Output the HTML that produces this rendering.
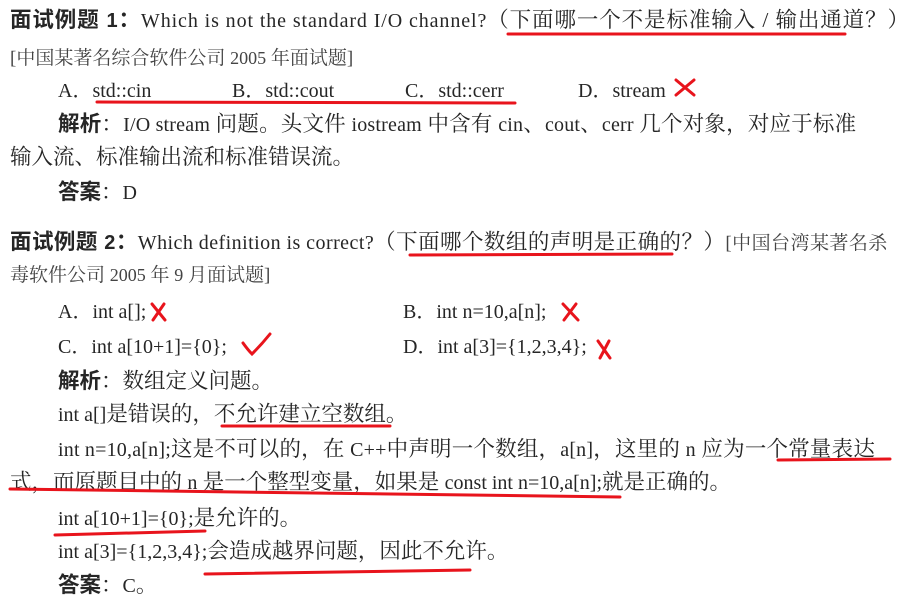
<!DOCTYPE html>
<html><head><meta charset="utf-8"><style>
body{margin:0;width:909px;height:603px;background:#fff;overflow:hidden;position:relative;}
.l{position:absolute;white-space:nowrap;font-family:"Liberation Serif","Noto Serif CJK SC",serif;font-size:21.5px;line-height:26px;color:#262626;}
.l i{font-style:normal;font-size:20px;}
.b{font-family:"Liberation Sans","Noto Sans CJK SC",sans-serif;font-weight:bold;}
.s{font-size:19px;color:#444;}
.s i{font-size:18px;}
svg{position:absolute;left:0;top:0;}
</style></head><body>
<div class="l" style="left:10px;top:7px;letter-spacing:0.9px"><span class="b">面试例题 <i>1</i>：</span><i>Which is not the standard I/O channel?</i>（下面哪一个不是标准输入 / 输出通道？）</div>
<div class="l s" style="left:10px;top:45px">[中国某著名综合软件公司 <i>2005</i> 年面试题]</div>
<div class="l" style="left:58px;top:77px"><i>A．std::cin</i></div>
<div class="l" style="left:232px;top:77px"><i>B．std::cout</i></div>
<div class="l" style="left:405px;top:77px"><i>C．std::cerr</i></div>
<div class="l" style="left:578px;top:77px"><i>D．stream</i></div>
<div class="l" style="left:58px;top:111px;letter-spacing:0.2px"><span class="b">解析</span>：<i>I/O stream</i> 问题。头文件 <i>iostream</i> 中含有 <i>cin</i>、<i>cout</i>、<i>cerr</i> 几个对象，对应于标准</div>
<div class="l" style="left:10px;top:144px">输入流、标准输出流和标准错误流。</div>
<div class="l" style="left:58px;top:179px"><span class="b">答案</span>：<i>D</i></div>
<div class="l" style="left:10px;top:229px;letter-spacing:0.45px"><span class="b">面试例题 <i>2</i>：</span><i>Which definition is correct?</i>（下面哪个数组的声明是正确的？）<span class="s">[中国台湾某著名杀</span></div>
<div class="l s" style="left:10px;top:262px">毒软件公司 <i>2005</i> 年 <i>9</i> 月面试题]</div>
<div class="l" style="left:58px;top:298px"><i>A．int a[];</i></div>
<div class="l" style="left:403px;top:298px"><i>B．int n=10,a[n];</i></div>
<div class="l" style="left:58px;top:333px"><i>C．int a[10+1]={0};</i></div>
<div class="l" style="left:403px;top:333px"><i>D．int a[3]={1,2,3,4};</i></div>
<div class="l" style="left:58px;top:368px"><span class="b">解析</span>：数组定义问题。</div>
<div class="l" style="left:58px;top:401px"><i>int a[]</i>是错误的，不允许建立空数组。</div>
<div class="l" style="left:58px;top:436px;letter-spacing:0.2px"><i>int n=10,a[n];</i>这是不可以的，在 <i>C++</i>中声明一个数组，<i>a[n]</i>，这里的 <i>n</i> 应为一个常量表达</div>
<div class="l" style="left:10px;top:469px">式，而原题目中的 <i>n</i> 是一个整型变量，如果是 <i>const int n=10,a[n];</i>就是正确的。</div>
<div class="l" style="left:58px;top:505px"><i>int a[10+1]={0};</i>是允许的。</div>
<div class="l" style="left:58px;top:538px"><i>int a[3]={1,2,3,4};</i>会造成越界问题，因此不允许。</div>
<div class="l" style="left:58px;top:572px"><span class="b">答案</span>：<i>C</i>。</div>
<svg width="909" height="603" fill="none" stroke="#e8141c" stroke-linecap="round">
<path d="M508 34 L845 34" stroke-width="3"/>
<path d="M97 102 L515 103" stroke-width="3"/>
<path d="M676 80 L694 95 M694 80 L676 95" stroke-width="3"/>
<path d="M410 255 L672 254" stroke-width="3"/>
<path d="M152 304 L165 320 M164 304 L153 320" stroke-width="3"/>
<path d="M563 304 L578 320 M576 304 L564 320" stroke-width="3"/>
<path d="M243 343 Q248 350 252 354 Q262 344 270 334" stroke-width="3"/>
<path d="M598 341 L610 358 M609 341 L600 358" stroke-width="3"/>
<path d="M222 426 L390 426" stroke-width="3"/>
<path d="M778 460 L890 459" stroke-width="3"/>
<path d="M10 489 Q300 492 620 497" stroke-width="3"/>
<path d="M55 535 L205 531" stroke-width="3"/>
<path d="M205 574 L470 570" stroke-width="3"/>
</svg>
</body></html>
